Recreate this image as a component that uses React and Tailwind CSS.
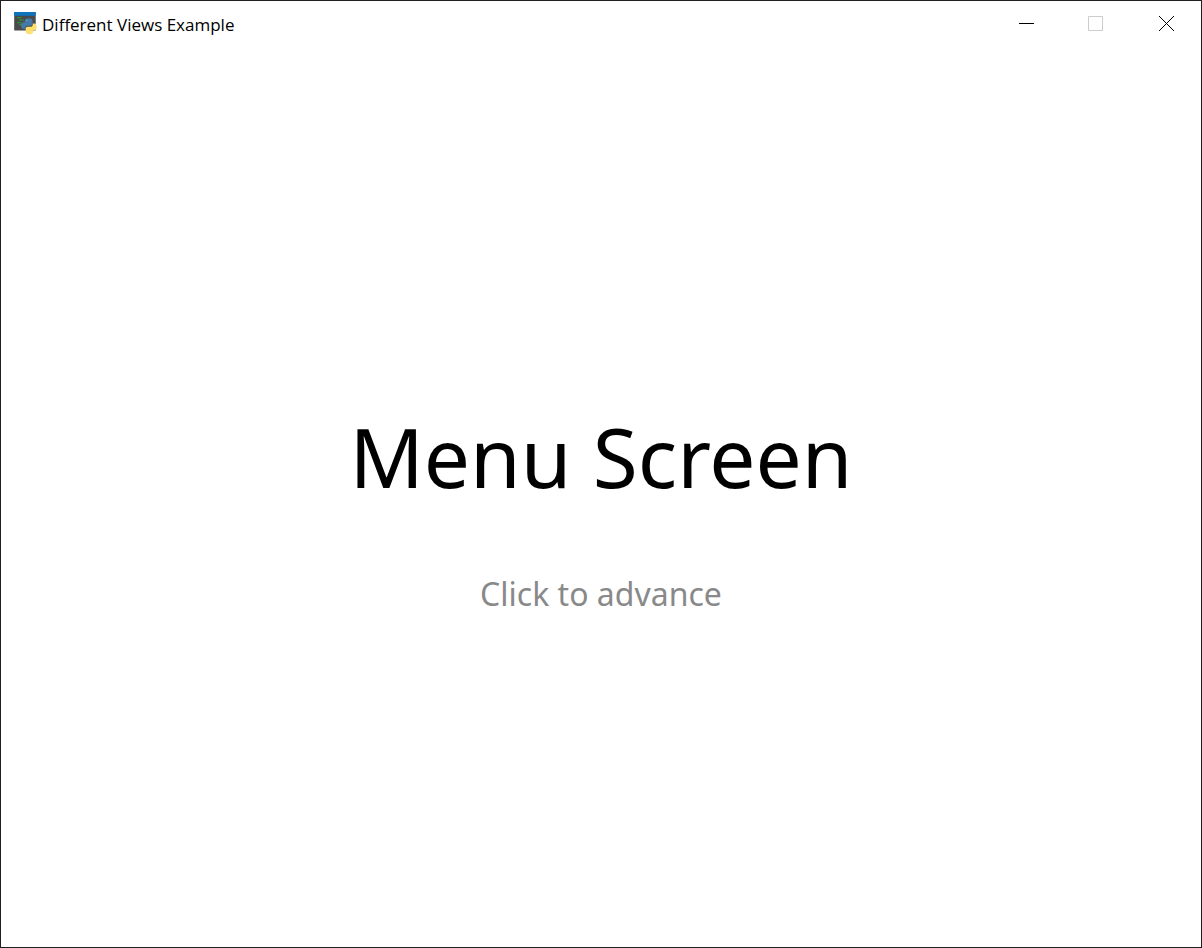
function AppIcon() {
  return (
    <svg className="h-6 w-6 shrink-0" viewBox="0 0 24 24" aria-hidden="true">
      <rect x="0.200" y="0" width="21.500" height="18.500" fill="#4a4a4a" />
      <rect x="0.200" y="0" width="21.500" height="3.800" fill="#0f73bb" />
      <path d="M3 5.700h4.500M5 8.200h5M3 10.700h4.500M5 12.700h3" stroke="#2f8f38" strokeWidth="1.200" />
      <path
        d="M14.500 6.200c-2.300 0-3.700.9-3.700 2.600v1.400H9.700c-1.700 0-2.700 1.300-2.700 3.400 0 2.300 1.100 3.400 2.500 3.400h1.900v-1c0-1.500 1.100-2.300 2.500-2.300h2.600c1.200 0 2-.8 2-2V8.800c0-1.700-1.600-2.600-4-2.600z"
        fill="#4579a8"
      />
      <path
        d="M15.500 22.200c2.300 0 3.700-.9 3.700-2.600v-1.300h.9c1.700 0 2.500-1.300 2.500-3.400 0-2.200-1-3.300-2.500-3.300h-1.300v.8c0 1.500-1 2.400-2.300 2.400h-2.700c-1.200 0-2.100.8-2.100 2v2.800c0 1.700 1.500 2.600 3.800 2.600z"
        fill="#ffdf6b"
      />
      <circle cx="12.800" cy="8.500" r="0.600" fill="#8fb1cd" />
      <circle cx="17.200" cy="20" r="0.600" fill="#fff0b0" />
    </svg>
  );
}

function WindowButton({ label, disabled = false, color, path }) {
  return (
    <button
      type="button"
      aria-label={label}
      disabled={disabled}
      className="flex h-full w-[70px] items-center justify-center"
    >
      <svg className="h-4 w-4" viewBox="0 0 16 16" aria-hidden="true">
        <path d={path} fill="none" stroke={color} />
      </svg>
    </button>
  );
}

export default function App() {
  return (
    <div className="flex min-h-screen flex-col border border-[#231f20] bg-white text-black">
      <header className="flex h-[46px] items-center pl-[13px]">
        <AppIcon />
        <h1 className="ml-1 flex-1 pt-px font-['Open_Sans',sans-serif] text-[17px] leading-6">
          Different Views Example
        </h1>
        <WindowButton label="Minimize" color="#000000" path="M1 7.5H16" />
        <WindowButton label="Maximize" disabled color="#cccccc" path="M.5 .5H14.5V14.5H.5Z" />
        <WindowButton label="Close" color="#000000" path="M1 0L16 15M16 0L1 15" />
      </header>
      <main className="flex flex-1 flex-col items-center justify-center pt-7 text-center font-['Noto_Sans',sans-serif]">
        <h2 className="text-[82px] leading-[100px]">Menu Screen</h2>
        <p className="mt-[66px] text-[32px] leading-[44px] text-[#898989]">Click to advance</p>
      </main>
    </div>
  );
}
